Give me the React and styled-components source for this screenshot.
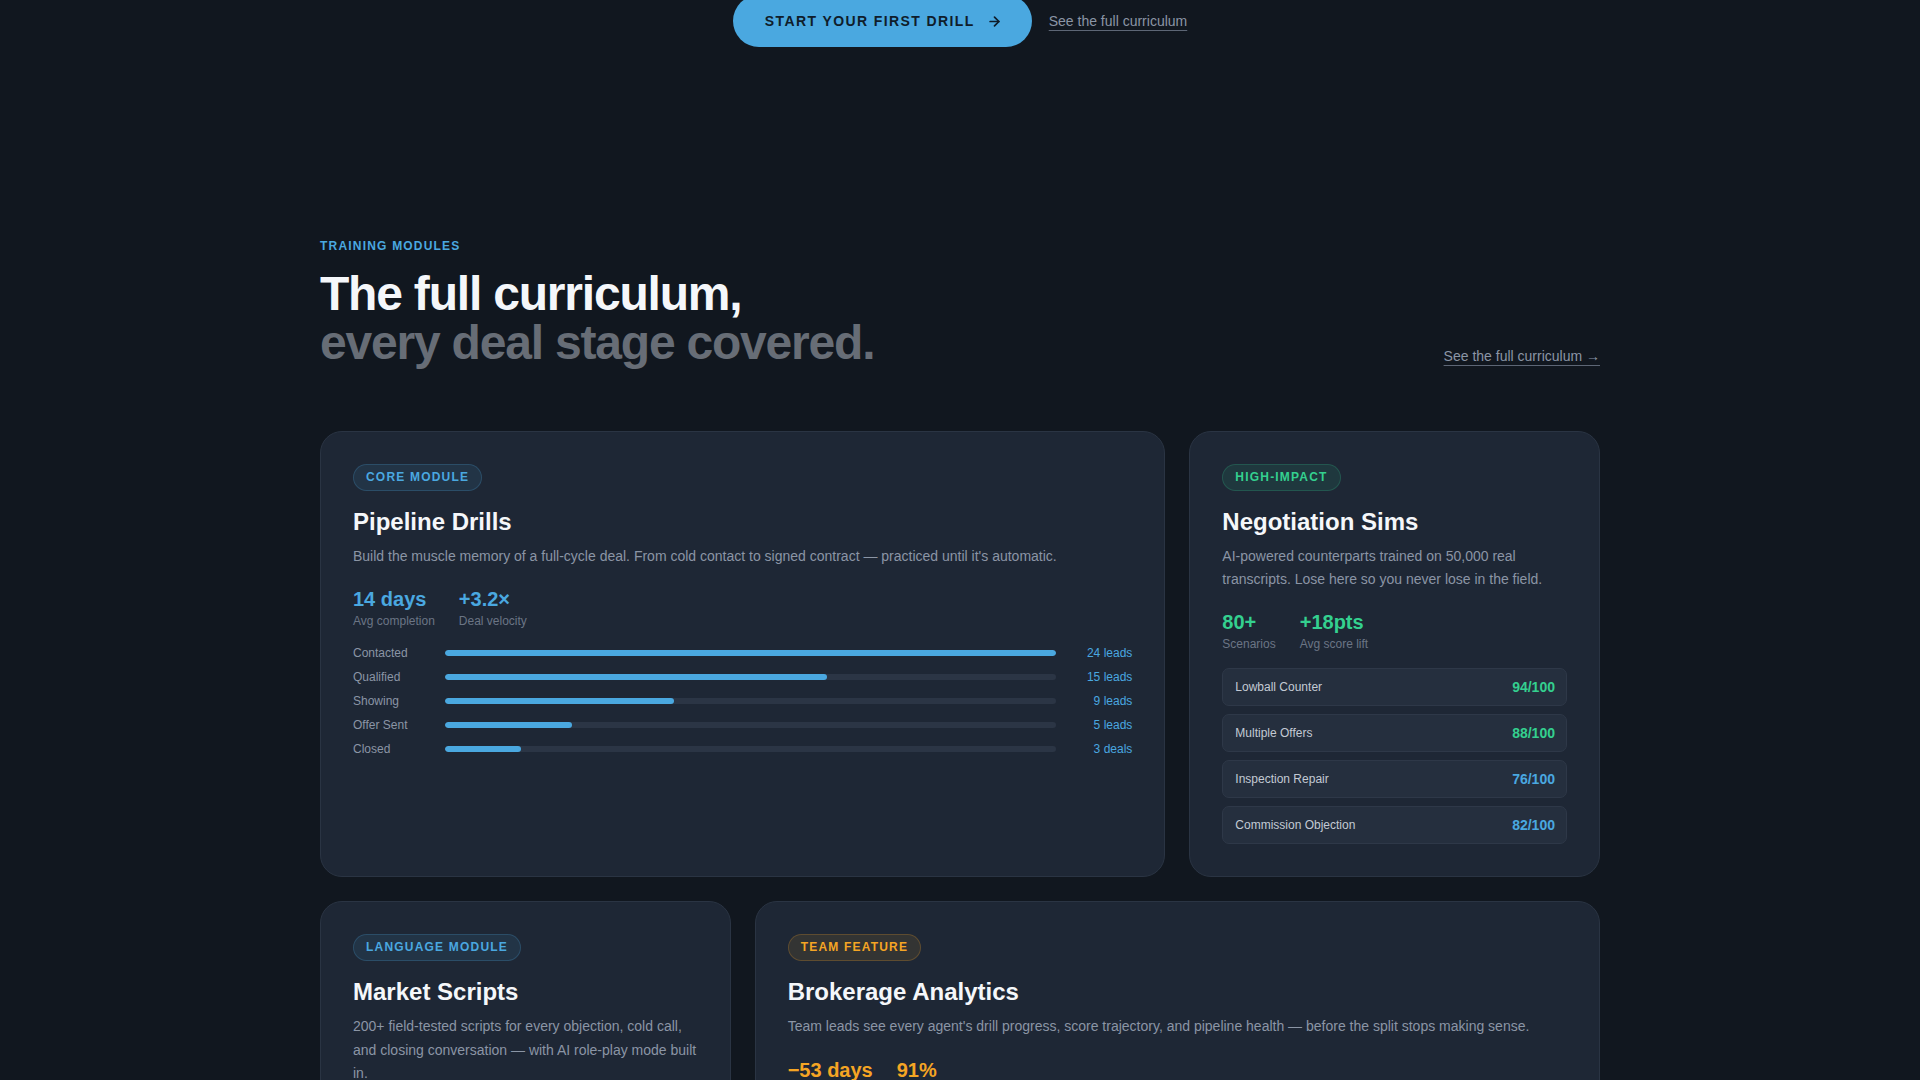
import React from 'react';
import styled, { createGlobalStyle, css } from 'styled-components';
import { ArrowRight } from 'lucide-react';

const GlobalStyle = createGlobalStyle`
  * {
    box-sizing: border-box;
  }
  body {
    margin: 0;
    background: #11171f;
    color: #f3f5f8;
    font-family: 'Liberation Sans', Arial, sans-serif;
    -webkit-font-smoothing: antialiased;
  }
`;

const tones = {
  blue: { fg: '#4aa8e0', bg: 'rgba(74, 168, 224, 0.1)', border: 'rgba(74, 168, 224, 0.22)' },
  green: { fg: '#34d08f', bg: 'rgba(52, 208, 143, 0.1)', border: 'rgba(52, 208, 143, 0.2)' },
  orange: { fg: '#f5a524', bg: 'rgba(245, 165, 36, 0.1)', border: 'rgba(245, 165, 36, 0.22)' },
};

const Page = styled.main`
  overflow: hidden;
`;

const Hero = styled.div`
  display: flex;
  justify-content: center;
  align-items: center;
  gap: 17px;
  margin-top: -5px;
`;

const PrimaryButton = styled.a`
  display: inline-flex;
  align-items: center;
  gap: 12px;
  padding: 18px 30px 18px 32px;
  border-radius: 999px;
  background: #4aa8e0;
  color: #0f1d2b;
  font-size: 14px;
  line-height: 16px;
  font-weight: 700;
  letter-spacing: 0.1em;
  text-transform: uppercase;
  text-decoration: none;
  cursor: pointer;
`;

const TextLink = styled.a`
  color: #8b95a5;
  font-size: 14px;
  line-height: 20px;
  text-decoration: underline;
  text-decoration-color: #5d6675;
  text-underline-offset: 4px;
  cursor: pointer;
`;

const Section = styled.section`
  padding: 191px 0 96px;
`;

const Container = styled.div`
  max-width: 1280px;
  margin: 0 auto;
`;

const Eyebrow = styled.div`
  color: #4aa8e0;
  font-size: 12px;
  line-height: 16px;
  font-weight: 700;
  letter-spacing: 0.1em;
  text-transform: uppercase;
`;

const HeaderRow = styled.div`
  display: flex;
  justify-content: space-between;
  align-items: flex-end;
  margin-top: 15px;
`;

const Heading = styled.h2`
  margin: 0;
  font-size: 48px;
  line-height: 1.03;
  font-weight: 700;
  letter-spacing: -0.025em;
  color: #f5f7fa;
`;

const Muted = styled.span`
  display: block;
  color: #676d76;
`;

const SideLink = styled(TextLink)`
  margin-bottom: 2px;
`;

const Grid = styled.div`
  display: grid;
  grid-template-columns: repeat(12, 1fr);
  gap: 24px;
  margin-top: 63px;
`;

const Card = styled.article`
  grid-column: span ${({ $span }) => $span};
  background: #1e2735;
  border: 1px solid #2a3443;
  border-radius: 22px;
  padding: 32px;
`;

const Badge = styled.span`
  display: inline-block;
  padding: 5px 12px;
  border-radius: 999px;
  font-size: 12px;
  line-height: 15px;
  font-weight: 700;
  letter-spacing: 0.1em;
  text-transform: uppercase;
  ${({ $tone }) => css`
    color: ${tones[$tone].fg};
    background: ${tones[$tone].bg};
    border: 1px solid ${tones[$tone].border};
  `}
`;

const Title = styled.h3`
  margin: 15px 0 0;
  font-size: 24px;
  line-height: 1.3;
  font-weight: 700;
  color: #f5f7fa;
`;

const Desc = styled.p`
  margin: 8px 0 0;
  font-size: 14px;
  line-height: 1.65;
  color: #8b95a5;
`;

const Stats = styled.div`
  display: flex;
  gap: 24px;
  margin-top: 19px;
`;

const Stat = styled.div`
  display: flex;
  flex-direction: column;
  gap: 2px;
`;

const StatValue = styled.span`
  font-size: 20px;
  line-height: 24px;
  font-weight: 700;
  color: ${({ $tone }) => tones[$tone].fg};
`;

const StatLabel = styled.span`
  font-size: 12px;
  line-height: 16px;
  color: #6b7585;
`;

const Funnel = styled.div`
  display: flex;
  flex-direction: column;
  gap: 8px;
  margin-top: 16px;
`;

const FunnelRow = styled.div`
  display: grid;
  grid-template-columns: 80px 1fr 64px;
  column-gap: 12px;
  align-items: center;
  font-size: 12px;
  line-height: 16px;
`;

const FunnelLabel = styled.span`
  color: #8b95a5;
`;

const Track = styled.div`
  height: 6px;
  border-radius: 3px;
  background: #2b3545;
  overflow: hidden;
`;

const Fill = styled.div`
  height: 100%;
  border-radius: 3px;
  background: #4aa8e0;
`;

const FunnelValue = styled.span`
  color: #4aa8e0;
  text-align: right;
`;

const ScoreList = styled.div`
  display: flex;
  flex-direction: column;
  gap: 8px;
  margin-top: 16px;
`;

const ScoreRow = styled.div`
  display: flex;
  justify-content: space-between;
  align-items: center;
  height: 38px;
  padding: 0 11px 0 12px;
  background: #252f3e;
  border: 1px solid #2e3848;
  border-radius: 7px;
`;

const ScoreName = styled.span`
  font-size: 12px;
  color: #c3cad4;
`;

const Score = styled.span`
  font-size: 14px;
  font-weight: 700;
  color: ${({ $tone }) => tones[$tone].fg};
`;

const funnel = [
  { label: 'Contacted', count: 24, unit: 'leads' },
  { label: 'Qualified', count: 15, unit: 'leads' },
  { label: 'Showing', count: 9, unit: 'leads' },
  { label: 'Offer Sent', count: 5, unit: 'leads' },
  { label: 'Closed', count: 3, unit: 'deals' },
];

const scenarios = [
  { name: 'Lowball Counter', score: 94 },
  { name: 'Multiple Offers', score: 88 },
  { name: 'Inspection Repair', score: 76 },
  { name: 'Commission Objection', score: 82 },
];

const StatGroup = ({ tone, items }) => (
  <Stats>
    {items.map(([value, label]) => (
      <Stat key={label}>
        <StatValue $tone={tone}>{value}</StatValue>
        <StatLabel>{label}</StatLabel>
      </Stat>
    ))}
  </Stats>
);

const App = () => {
  const max = funnel[0].count;

  return (
    <Page>
      <GlobalStyle />
      <Hero>
        <PrimaryButton>
          Start your first drill
          <ArrowRight size={15} strokeWidth={2.75} />
        </PrimaryButton>
        <TextLink>See the full curriculum</TextLink>
      </Hero>

      <Section>
        <Container>
          <Eyebrow>Training Modules</Eyebrow>
          <HeaderRow>
            <Heading>
              The full curriculum,
              <Muted>every deal stage covered.</Muted>
            </Heading>
            <SideLink>See the full curriculum →</SideLink>
          </HeaderRow>

          <Grid>
            <Card $span={8}>
              <Badge $tone='blue'>Core Module</Badge>
              <Title>Pipeline Drills</Title>
              <Desc>
                Build the muscle memory of a full-cycle deal. From cold contact to signed
                contract — practiced until it's automatic.
              </Desc>
              <StatGroup
                tone='blue'
                items={[
                  ['14 days', 'Avg completion'],
                  ['+3.2×', 'Deal velocity'],
                ]}
              />
              <Funnel>
                {funnel.map((row) => (
                  <FunnelRow key={row.label}>
                    <FunnelLabel>{row.label}</FunnelLabel>
                    <Track>
                      <Fill style={{ width: `${(row.count / max) * 100}%` }} />
                    </Track>
                    <FunnelValue>
                      {row.count} {row.unit}
                    </FunnelValue>
                  </FunnelRow>
                ))}
              </Funnel>
            </Card>

            <Card $span={4}>
              <Badge $tone='green'>High-Impact</Badge>
              <Title>Negotiation Sims</Title>
              <Desc>
                AI-powered counterparts trained on 50,000 real transcripts. Lose here so you
                never lose in the field.
              </Desc>
              <StatGroup
                tone='green'
                items={[
                  ['80+', 'Scenarios'],
                  ['+18pts', 'Avg score lift'],
                ]}
              />
              <ScoreList>
                {scenarios.map((s) => (
                  <ScoreRow key={s.name}>
                    <ScoreName>{s.name}</ScoreName>
                    <Score $tone={s.score >= 85 ? 'green' : 'blue'}>{s.score}/100</Score>
                  </ScoreRow>
                ))}
              </ScoreList>
            </Card>

            <Card $span={4}>
              <Badge $tone='blue'>Language Module</Badge>
              <Title>Market Scripts</Title>
              <Desc>
                200+ field-tested scripts for every objection, cold call, and closing
                conversation — with AI role-play mode built in.
              </Desc>
            </Card>

            <Card $span={8}>
              <Badge $tone='orange'>Team Feature</Badge>
              <Title>Brokerage Analytics</Title>
              <Desc>
                Team leads see every agent's drill progress, score trajectory, and pipeline
                health — before the split stops making sense.
              </Desc>
              <StatGroup
                tone='orange'
                items={[
                  ['−53 days', 'Faster ramp'],
                  ['91%', 'Agent retention'],
                ]}
              />
            </Card>
          </Grid>
        </Container>
      </Section>
    </Page>
  );
};

export default App;
